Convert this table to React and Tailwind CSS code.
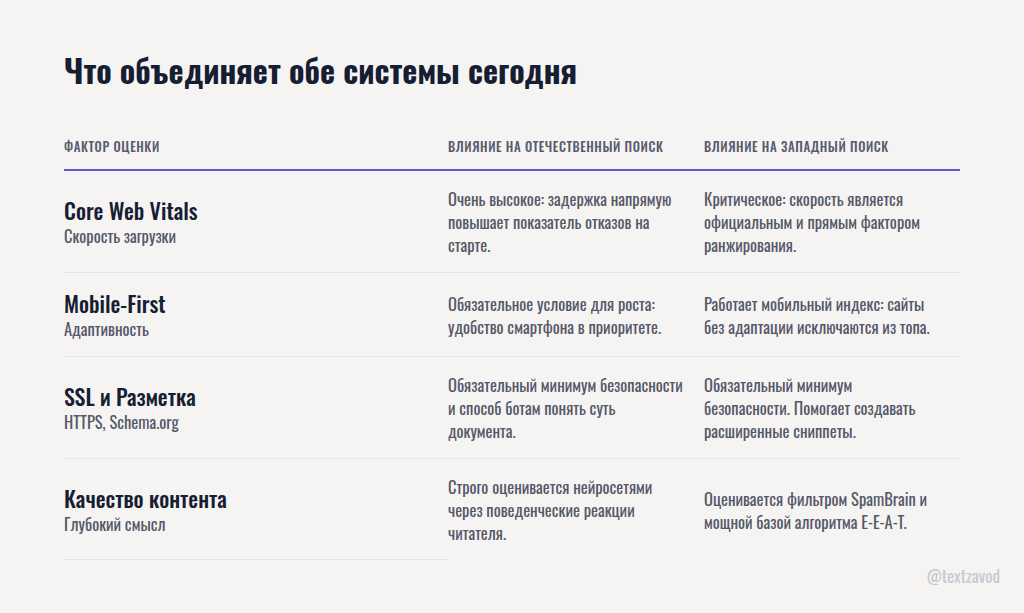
const rows = [
  {
    title: "Core Web Vitals",
    sub: "Скорость загрузки",
    ru: "Очень высокое: задержка напрямую повышает показатель отказов на старте.",
    west: "Критическое: скорость является официальным и прямым фактором ранжирования.",
  },
  {
    title: "Mobile-First",
    sub: "Адаптивность",
    ru: "Обязательное условие для роста: удобство смартфона в приоритете.",
    west: "Работает мобильный индекс: сайты без адаптации исключаются из топа.",
  },
  {
    title: "SSL и Разметка",
    sub: "HTTPS, Schema.org",
    ru: "Обязательный минимум безопасности и способ ботам понять суть документа.",
    west: "Обязательный минимум безопасности. Помогает создавать расширенные сниппеты.",
  },
  {
    title: "Качество контента",
    sub: "Глубокий смысл",
    ru: "Строго оценивается нейросетями через поведенческие реакции читателя.",
    west: "Оценивается фильтром SpamBrain и мощной базой алгоритма E-E-A-T.",
  },
];

export default function App() {
  return (
    <div className="w-[1024px] h-[613px] bg-[#f5f4f2] font-['Oswald',sans-serif] relative">
      <div className="px-16 pt-[46px]">
        <h1 className="text-[32px] leading-[48px] font-bold text-[#161e33]">
          Что объединяет обе системы сегодня
        </h1>
        <div className="mt-[44px] grid grid-cols-[384px_256px_256px] border-b-2 border-[#5b5be0] pb-[13px] text-[12.8px] leading-[18px] font-medium uppercase tracking-[0.6px] text-[#585b70]">
          <div>Фактор оценки</div>
          <div>Влияние на отечественный поиск</div>
          <div>Влияние на западный поиск</div>
        </div>
        {rows.map((r, i) => {
          const last = i === rows.length - 1;
          return (
            <div
              key={r.title}
              className={
                last
                  ? "grid grid-cols-[384px_256px_256px] items-center"
                  : "grid grid-cols-[384px_256px_256px] items-center border-b border-[#e4e2f2]"
              }
            >
              <div
                className={
                  last
                    ? "py-4 min-h-[101px] flex flex-col justify-center border-b border-[#e4e2f2]"
                    : "py-4 flex flex-col justify-center"
                }
              >
                <div className="text-[22px] leading-[28px] font-medium text-[#161e33]">{r.title}</div>
                <div className="text-[16.5px] leading-[23px] text-[#555869]">{r.sub}</div>
              </div>
              <div className="py-4 pr-5 text-[16.5px] leading-[23px] text-[#555869]">{r.ru}</div>
              <div className="py-4 pr-5 text-[16.5px] leading-[23px] text-[#555869]">{r.west}</div>
            </div>
          );
        })}
      </div>
      <div className="absolute right-[24px] bottom-[26px] text-[17px] leading-[22px] text-[#c9c9d1]">
        @textzavod
      </div>
    </div>
  );
}
